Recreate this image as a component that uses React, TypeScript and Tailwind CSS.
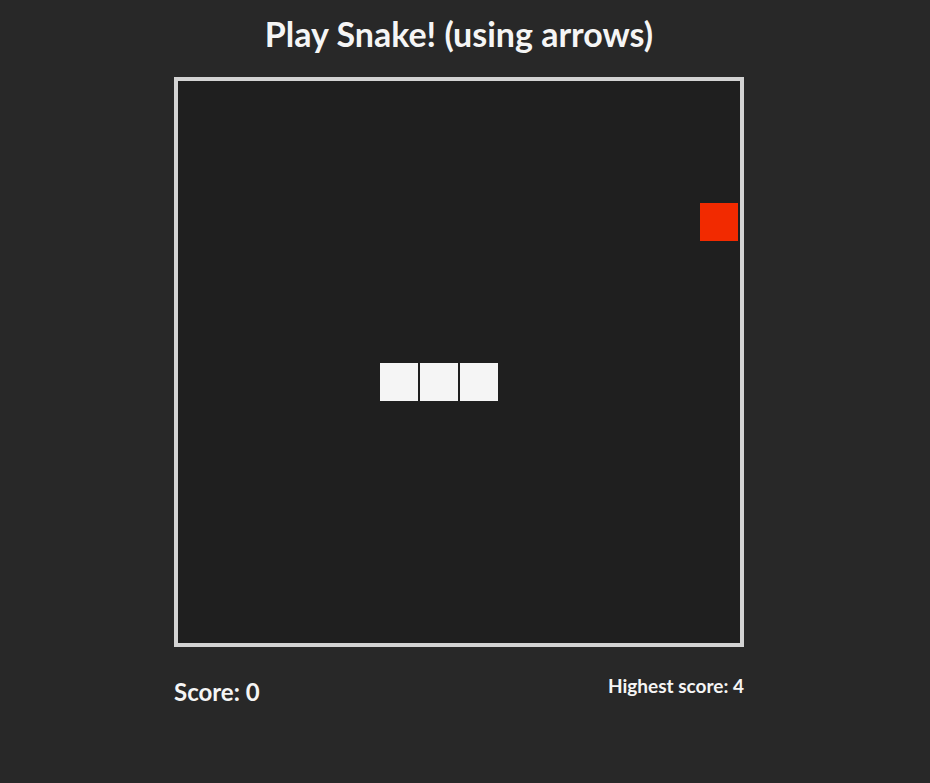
import React from "react";

const snake = [
  { x: 5, y: 7 },
  { x: 6, y: 7 },
  { x: 7, y: 7 },
];
const food = { x: 13, y: 3 };

const colStart = [
  "col-start-1", "col-start-2", "col-start-3", "col-start-4", "col-start-5",
  "col-start-6", "col-start-7", "col-start-8", "col-start-9", "col-start-10",
  "col-start-11", "col-start-12", "col-start-13", "col-start-14",
];
const rowStart = [
  "row-start-1", "row-start-2", "row-start-3", "row-start-4", "row-start-5",
  "row-start-6", "row-start-7", "row-start-8", "row-start-9", "row-start-10",
  "row-start-11", "row-start-12", "row-start-13", "row-start-14",
];

export default function App() {
  return (
    <div
      className="min-h-[783px] w-full bg-[#282828] text-[#f5f5f5]"
      style={{ fontFamily: "Lato, 'Open Sans', sans-serif" }}
    >
      <div className="ml-[174px] w-[570px] flex flex-col">
        <h1 className="pt-[13px] h-[77px] text-center text-[34px] font-bold leading-[42px]">
          Play Snake! (using arrows)
        </h1>
        <div className="w-[570px] h-[570px] border-4 border-[#d3d3d3] bg-[#1f1f1f] pl-[1px] pt-[1px]">
          <div className="grid grid-cols-[repeat(14,40px)] grid-rows-[repeat(14,40px)]">
            {snake.map((s, i) => (
              <div
                key={i}
                className={`${colStart[s.x]} ${rowStart[s.y]} m-px bg-[#f5f5f5]`}
              />
            ))}
            <div className={`${colStart[food.x]} ${rowStart[food.y]} m-px bg-[#f22a00]`} />
          </div>
        </div>
        <div className="flex justify-between items-start pt-[28px]">
          <div className="text-[24px] font-bold leading-[30px] mt-[2px]">Score: 0</div>
          <div className="text-[19px] font-bold leading-[24px] -mt-[1px]">Highest score: 4</div>
        </div>
      </div>
    </div>
  );
}
